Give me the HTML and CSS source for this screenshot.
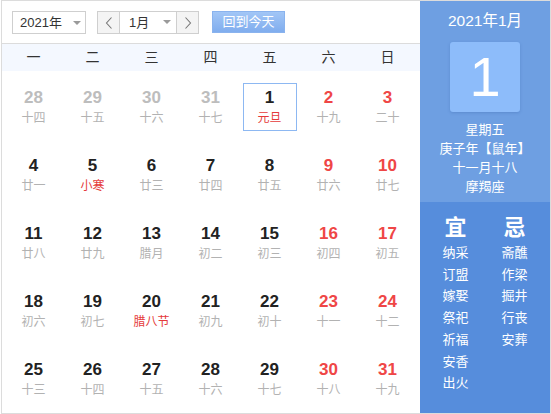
FILE: index.html
```html
<!DOCTYPE html>
<html lang="zh-CN">
<head>
<meta charset="utf-8">
<title>万年历</title>
<link rel="stylesheet" href="styles.css">
</head>
<body>
<div class="cal">
  <div class="main">
    <div class="toolbar">
      <div class="sel year-sel"><span>2021年</span><i class="caret"></i></div>
      <div class="month-group">
        <div class="nav-btn"><svg width="8" height="12" viewBox="0 0 8 12"><polyline points="6.5,0.5 1.5,6 6.5,11.5" fill="none" stroke="#777" stroke-width="1.1"/></svg></div>
        <div class="sel month-sel"><span>1月</span><i class="caret"></i></div>
        <div class="nav-btn"><svg width="8" height="12" viewBox="0 0 8 12"><polyline points="1.5,0.5 6.5,6 1.5,11.5" fill="none" stroke="#777" stroke-width="1.1"/></svg></div>
      </div>
      <div class="today-btn">回到今天</div>
    </div>
    <div class="week-head">
      <span>一</span><span>二</span><span>三</span><span>四</span><span>五</span><span>六</span><span>日</span>
    </div>
    <div class="days">
      <div class="cell"><div class="day other"><b>28</b><em>十四</em></div></div>
      <div class="cell"><div class="day other"><b>29</b><em>十五</em></div></div>
      <div class="cell"><div class="day other"><b>30</b><em>十六</em></div></div>
      <div class="cell"><div class="day other"><b>31</b><em>十七</em></div></div>
      <div class="cell"><div class="day selected"><b>1</b><em class="fest">元旦</em></div></div>
      <div class="cell"><div class="day weekend"><b>2</b><em>十九</em></div></div>
      <div class="cell"><div class="day weekend"><b>3</b><em>二十</em></div></div>

      <div class="cell"><div class="day"><b>4</b><em>廿一</em></div></div>
      <div class="cell"><div class="day"><b>5</b><em class="fest">小寒</em></div></div>
      <div class="cell"><div class="day"><b>6</b><em>廿三</em></div></div>
      <div class="cell"><div class="day"><b>7</b><em>廿四</em></div></div>
      <div class="cell"><div class="day"><b>8</b><em>廿五</em></div></div>
      <div class="cell"><div class="day weekend"><b>9</b><em>廿六</em></div></div>
      <div class="cell"><div class="day weekend"><b>10</b><em>廿七</em></div></div>

      <div class="cell"><div class="day"><b>11</b><em>廿八</em></div></div>
      <div class="cell"><div class="day"><b>12</b><em>廿九</em></div></div>
      <div class="cell"><div class="day"><b>13</b><em>腊月</em></div></div>
      <div class="cell"><div class="day"><b>14</b><em>初二</em></div></div>
      <div class="cell"><div class="day"><b>15</b><em>初三</em></div></div>
      <div class="cell"><div class="day weekend"><b>16</b><em>初四</em></div></div>
      <div class="cell"><div class="day weekend"><b>17</b><em>初五</em></div></div>

      <div class="cell"><div class="day"><b>18</b><em>初六</em></div></div>
      <div class="cell"><div class="day"><b>19</b><em>初七</em></div></div>
      <div class="cell"><div class="day"><b>20</b><em class="fest">腊八节</em></div></div>
      <div class="cell"><div class="day"><b>21</b><em>初九</em></div></div>
      <div class="cell"><div class="day"><b>22</b><em>初十</em></div></div>
      <div class="cell"><div class="day weekend"><b>23</b><em>十一</em></div></div>
      <div class="cell"><div class="day weekend"><b>24</b><em>十二</em></div></div>

      <div class="cell"><div class="day"><b>25</b><em>十三</em></div></div>
      <div class="cell"><div class="day"><b>26</b><em>十四</em></div></div>
      <div class="cell"><div class="day"><b>27</b><em>十五</em></div></div>
      <div class="cell"><div class="day"><b>28</b><em>十六</em></div></div>
      <div class="cell"><div class="day"><b>29</b><em>十七</em></div></div>
      <div class="cell"><div class="day weekend"><b>30</b><em>十八</em></div></div>
      <div class="cell"><div class="day weekend"><b>31</b><em>十九</em></div></div>
    </div>
  </div>
  <div class="side">
    <div class="side-top">
      <div class="ym">2021年1月</div>
      <div class="big-day">1</div>
      <div class="info">
        <div>星期五</div>
        <div>庚子年【鼠年】</div>
        <div>十一月十八</div>
        <div>摩羯座</div>
      </div>
    </div>
    <div class="side-bottom">
      <div class="col">
        <div class="col-title">宜</div>
        <div>纳采</div><div>订盟</div><div>嫁娶</div><div>祭祀</div><div>祈福</div><div>安香</div><div>出火</div>
      </div>
      <div class="col">
        <div class="col-title">忌</div>
        <div>斋醮</div><div>作梁</div><div>掘井</div><div>行丧</div><div>安葬</div>
      </div>
    </div>
  </div>
</div>
</body>
</html>
```

FILE: styles.css
```css
html, body {
  margin: 0;
  padding: 0;
  background: #fff;
}

.cal {
  display: flex;
  width: 550px;
  height: 414px;
  margin-left: 1px;
  border: 1px solid #dcdcdc;
  box-sizing: border-box;
  font-family: "Liberation Sans", "Noto Sans CJK SC", sans-serif;
  color: #333;
}

.main {
  width: 418px;
  display: flex;
  flex-direction: column;
}

.toolbar {
  height: 42px;
  box-sizing: content-box;
  border-bottom: 1px solid #dcdcdc;
  display: flex;
  align-items: flex-start;
  padding-left: 10px;
  padding-top: 0;
}

.sel {
  position: relative;
  height: 23px;
  box-sizing: border-box;
  background: #fff;
  font-size: 13px;
  line-height: 21px;
  color: #333;
}

.sel span {
  display: block;
}

.caret {
  position: absolute;
  top: 9px;
  width: 0;
  height: 0;
  border-left: 4px solid transparent;
  border-right: 4px solid transparent;
  border-top: 4px solid #9a9a9a;
}

.year-sel {
  margin-top: 10px;
  width: 74px;
  border: 1px solid #cfcfcf;
  padding-left: 7px;
}

.year-sel .caret {
  right: 4px;
}

.month-group {
  margin-top: 10px;
  margin-left: 11px;
  display: flex;
  height: 23px;
  box-sizing: border-box;
  border: 1px solid #cfcfcf;
}

.nav-btn {
  width: 21px;
  height: 21px;
  background: #f4f4f4;
  display: flex;
  align-items: center;
  justify-content: center;
}

.month-sel {
  width: 58px;
  height: 21px;
  border-left: 1px solid #cfcfcf;
  border-right: 1px solid #cfcfcf;
  padding-left: 9px;
  line-height: 21px;
}

.month-sel .caret {
  right: 5px;
  top: 8px;
}

.today-btn {
  margin-top: 10px;
  margin-left: 13px;
  width: 73px;
  height: 22px;
  box-sizing: border-box;
  background: linear-gradient(#a2c6f6, #80adee);
  border: 1px solid #8ab3ee;
  color: #fff;
  font-size: 13px;
  line-height: 20px;
  text-align: center;
}

.week-head {
  height: 27px;
  background: #f4f8ff;
  display: grid;
  grid-template-columns: repeat(7, 59px);
  padding-left: 2px;
  align-items: center;
  font-size: 14px;
  color: #333;
}

.week-head span {
  text-align: center;
  line-height: 27px;
}

.days {
  flex: 1;
  display: grid;
  grid-template-columns: repeat(7, 59px);
  grid-template-rows: repeat(5, 68px);
  padding-left: 2px;
  padding-top: 2px;
}

.cell {
  display: flex;
  align-items: center;
  justify-content: center;
}

.day {
  width: 54px;
  height: 48px;
  box-sizing: border-box;
  border: 1px solid transparent;
  padding-top: 4px;
  display: flex;
  flex-direction: column;
  align-items: center;
  gap: 2px;
}

.day b {
  font-size: 17px;
  line-height: 20px;
  font-weight: bold;
  color: #222;
}

.day em {
  font-style: normal;
  font-size: 12px;
  line-height: 16px;
  color: #b2b2b2;
}

.day.other b {
  color: #bdbdbd;
}

.day.weekend b {
  color: #ef4646;
}

.day em.fest {
  color: #e53a3a;
}

.day.selected {
  border-color: #8db8f2;
}

.side {
  width: 130px;
  display: flex;
  flex-direction: column;
  color: #fff;
}

.side-top {
  height: 201px;
  background: #6e9fe2;
  display: flex;
  flex-direction: column;
  align-items: center;
  padding-top: 10px;
  box-sizing: border-box;
}

.ym {
  font-size: 15.5px;
  line-height: 20px;
}

.big-day {
  margin-top: 11px;
  width: 70px;
  height: 70px;
  background: #8dbcfa;
  border-radius: 3px;
  box-shadow: 0 1px 3px rgba(40, 80, 150, 0.25);
  font-size: 56px;
  line-height: 70px;
  text-align: center;
}

.info {
  margin-top: 8px;
  font-size: 13px;
  line-height: 19px;
  text-align: center;
}

.side-bottom {
  flex: 1;
  background: #568ddc;
  display: grid;
  grid-template-columns: 59px 59px;
  padding: 12px 6px 0;
  align-content: start;
}

.col {
  display: flex;
  flex-direction: column;
  align-items: center;
  font-size: 13px;
  line-height: 21.7px;
}

.col-title {
  font-size: 22px;
  font-weight: bold;
  line-height: 28px;
}
```
